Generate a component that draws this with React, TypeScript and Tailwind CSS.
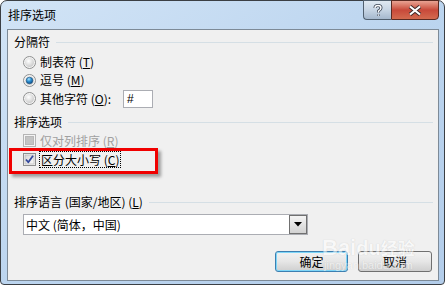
import React from "react";

const font = { fontFamily: '"Noto Sans CJK SC", "Liberation Sans", sans-serif' };

function Radio({ checked }: { checked?: boolean }) {
  return (
    <svg width="13" height="13" viewBox="0 0 13 13" className="shrink-0">
      <defs>
        <radialGradient id="rg" cx="0.4" cy="0.35" r="0.7">
          <stop offset="0" stopColor="#ffffff" />
          <stop offset="1" stopColor="#c8c8c8" />
        </radialGradient>
        <radialGradient id="rb" cx="0.4" cy="0.3" r="0.7">
          <stop offset="0" stopColor="#a6e2ff" />
          <stop offset="0.5" stopColor="#2c8fd0" />
          <stop offset="1" stopColor="#0d4f8c" />
        </radialGradient>
      </defs>
      <circle cx="6.5" cy="6.5" r="6" fill="#f4f4f4" stroke="#8e8f8f" />
      <circle cx="6.5" cy="6.5" r="4.5" fill="url(#rg)" />
      {checked && <circle cx="6.5" cy="6.5" r="3.3" fill="url(#rb)" stroke="#1b4d78" strokeWidth="0.6" />}
    </svg>
  );
}

function Check({ checked, disabled }: { checked?: boolean; disabled?: boolean }) {
  return (
    <svg width="13" height="13" viewBox="0 0 13 13" className="shrink-0">
      <defs>
        <linearGradient id="cg" x1="0" y1="0" x2="1" y2="1">
          <stop offset="0" stopColor="#d6d6d6" />
          <stop offset="1" stopColor="#fafafa" />
        </linearGradient>
      </defs>
      <rect x="0.5" y="0.5" width="12" height="12" fill="#f4f4f4" stroke={disabled ? "#b5b5b5" : "#8e8f8f"} />
      {disabled ? (
        <rect x="2.5" y="2.5" width="8" height="8" fill="#c4c4c4" stroke="#b8b8b8" />
      ) : (
        <rect x="2" y="2" width="9" height="9" fill="url(#cg)" stroke="#b0b0b0" strokeWidth="0.6" />
      )}
      {checked && (
        <path d="M3 6.5 L5.3 9.3 L10 2.8" fill="none" stroke="#31479c" strokeWidth="1.8" strokeLinejoin="round" />
      )}
    </svg>
  );
}

function GroupHeader({ label, className = "" }: { label: React.ReactNode; className?: string }) {
  return (
    <div className={`flex items-center h-[14px] pl-[6px] pr-[5px] ${className}`}>
      <span className="text-[12px] leading-[14px] text-black whitespace-nowrap">{label}</span>
      <div className="flex-1 h-px bg-[#d5dfe5] ml-[6px]" />
    </div>
  );
}

export default function App() {
  return (
    <div className="w-[446px] h-[286px] bg-white relative overflow-hidden" style={font}>
      <div className="w-[445px] h-[285px] rounded-t-[7px] rounded-b-[4px] border border-[#3b3f44] bg-gradient-to-br from-[#d2e4f6] via-[#bcd5ef] to-[#b3cdea] flex flex-col">
        {/* title bar */}
        <div className="h-[28px] flex items-start justify-between pl-[7px] pr-[5px]">
          <span className="text-[12px] leading-[14px] mt-[7px] text-black">排序选项</span>
          <div className="flex -mt-px">
            <div className="w-[28px] h-[20px] rounded-bl-[4px] border border-[#51606f] border-r-0 bg-gradient-to-b from-[#e0e9f2] via-[#c7d5e4] to-[#a5b8cd] flex items-center justify-center">
              <svg width="10" height="13" viewBox="0 0 10 13">
                <path d="M2 4 Q2 1.5 5 1.5 Q8 1.5 8 4 Q8 5.5 5.5 7 L5.5 8.5 M5.5 10.5 L5.5 11.8" fill="none" stroke="#3c4656" strokeWidth="3" />
                <path d="M2 4 Q2 1.5 5 1.5 Q8 1.5 8 4 Q8 5.5 5.5 7 L5.5 8.5 M5.5 10.5 L5.5 11.8" fill="none" stroke="#ffffff" strokeWidth="1.4" />
              </svg>
            </div>
            <div className="w-[48px] h-[20px] rounded-br-[4px] border border-[#5a2a22] bg-gradient-to-b from-[#e8a393] via-[#c8493a] to-[#d36a4f] flex items-center justify-center">
              <svg width="14" height="11" viewBox="0 0 14 11">
                <path d="M2 1.5 L12 9.5 M12 1.5 L2 9.5" fill="none" stroke="#3e2a28" strokeWidth="4" />
                <path d="M2 1.5 L12 9.5 M12 1.5 L2 9.5" fill="none" stroke="#ffffff" strokeWidth="2.2" />
              </svg>
            </div>
          </div>
        </div>
        {/* client */}
        <div className="ml-[6px] w-[432px] h-[252px] border border-[#7d8a97] bg-[#f0f0f0] flex flex-col">
          <GroupHeader label="分隔符" className="mt-[5px]" />
          <div className="mt-[4px] flex flex-col pl-[15px] text-[12px] leading-[14px] text-black">
            <div className="h-[18px] flex items-center gap-[4px]">
              <Radio />
              <span>制表符 (<u>T</u>)</span>
            </div>
            <div className="h-[18px] flex items-center gap-[4px]">
              <Radio checked />
              <span>逗号 (<u>M</u>)</span>
            </div>
            <div className="h-[19px] flex items-center gap-[4px]">
              <Radio />
              <span className="w-[79px]">其他字符 (<u>O</u>):</span>
              <div className="w-[30px] h-[18px] border border-[#abadb3] bg-white flex items-center pl-[3px] text-[12px]" style={{ fontFamily: '"Liberation Sans", sans-serif' }}>
                #
              </div>
            </div>
          </div>
          <GroupHeader label="排序选项" className="mt-[7px]" />
          <div className="mt-[2px] flex flex-col pl-[15px] text-[12px] leading-[14px]">
            <div className="h-[19px] flex items-center gap-[4px] text-[#a0a0a0]">
              <Check disabled />
              <span>仅对列排序 (<u>R</u>)</span>
            </div>
            <div className="h-[19px] flex items-center gap-[3px] text-black">
              <Check checked />
              <span className="border border-dotted border-black px-[1px] leading-[15px]">区分大小写 (<u>C</u>)</span>
            </div>
          </div>
          <GroupHeader label={<>排序语言 (国家/地区) (<u>L</u>)</>} className="mt-[26px]" />
          <div className="mt-[5px] ml-[15px] w-[285px] h-[21px] border border-[#abadb3] bg-white flex items-stretch">
            <span className="flex-1 text-[12px] leading-[19px] pl-[2px] text-black">中文 (简体，中国)</span>
            <div className="w-[18px] border border-[#707070] bg-gradient-to-b from-[#f4f4f4] to-[#d2d2d2] flex items-center justify-center">
              <svg width="8" height="5" viewBox="0 0 8 5">
                <path d="M0 0 L8 0 L4 4.5 Z" fill="#000" />
              </svg>
            </div>
          </div>
          <div className="mt-[16px] flex justify-end gap-[10px] pr-[6px]">
            <div className="w-[73px] h-[21px] rounded-[3px] border border-[#3c7fb1] shadow-[inset_0_0_0_1px_#7ed6f8] bg-gradient-to-b from-[#f2f2f2] via-[#e6e6e6] to-[#cfcfcf] flex items-center justify-center text-[12px] text-black">
              确定
            </div>
            <div className="w-[74px] h-[21px] rounded-[3px] border border-[#707070] bg-gradient-to-b from-[#f2f2f2] via-[#e6e6e6] to-[#cfcfcf] flex items-center justify-center text-[12px] text-black">
              取消
            </div>
          </div>
        </div>
      </div>
      {/* red highlight */}
      <div className="absolute left-[9px] top-[148px] w-[149px] h-[26px] border-[3px] border-[#f00000] shadow-[3px_3px_3px_rgba(0,0,0,0.35)]" />
      {/* watermark */}
      <div className="absolute left-[322px] top-[236px] flex flex-col items-center pointer-events-none text-white opacity-55" style={{ fontFamily: '"Liberation Sans", sans-serif' }}>
        <span className="text-[22px] font-bold leading-[24px] [text-shadow:0_0_1px_#aaa]">Bai<span className="text-[20px]">du</span><span style={font} className="text-[17px]">经验</span></span>
        <span className="text-[11px] leading-[11px] [text-shadow:0_0_1px_#aaa]">jingyan.baidu.com</span>
      </div>
    </div>
  );
}
